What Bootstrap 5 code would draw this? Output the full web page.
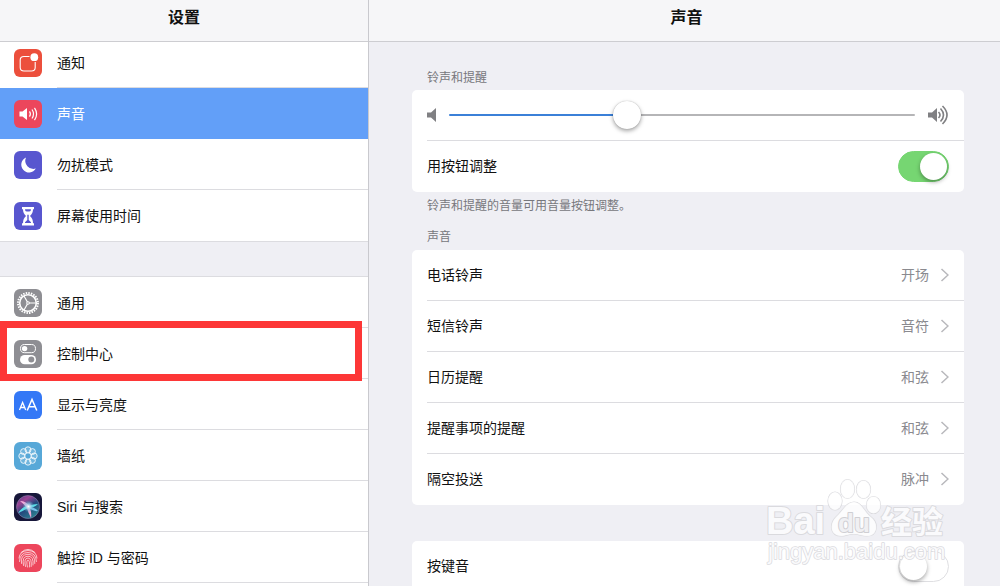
<!DOCTYPE html>
<html lang="zh-CN">
<head>
<meta charset="utf-8">
<meta name="viewport" content="width=device-width, initial-scale=1">
<title>设置 - 声音</title>
<link href="https://cdn.jsdelivr.net/npm/bootstrap@5.3.0/dist/css/bootstrap.min.css" rel="stylesheet">
<style>
  :root { --pane: #efeff4; --rule: #dcdce0; --bar-rule: #cdcdd1; --muted: #8a8a8f; }
  body { font-family: "Liberation Sans", "Noto Sans CJK SC", sans-serif; font-size: 14px; line-height: 20px; color: #111; background: var(--pane); }
  .side-col { flex: 0 0 36.9%; border-right: 1px solid #c9c9ce; }
  .title-bar { height: 42px; padding-bottom: 6px; background: #f6f6f8; border-bottom: 1px solid var(--bar-rule); z-index: 2; }
  .title-bar h1 { font-size: 16px; line-height: 20px; font-weight: 700; }
  .menu-first { margin-top: -5px; border-bottom: 1px solid var(--rule); }
  .menu-second { margin-top: 34px; border-top: 1px solid var(--rule); }
  .menu-row { height: 51px; padding-left: 14px; gap: 15px; color: #111; }
  .menu-row svg { width: 28px; height: 28px; flex: none; }
  .row-label { border-bottom: 1px solid var(--rule); padding-top: 2px; }
  .menu-first .menu-row:last-child .row-label, .menu-row.selected .row-label { border-color: transparent; }
  .menu-row.selected { background: #629ff8; color: #fff; }
  .marker { inset: -7px 6px -2px 0; border: 7px solid #fd3737; z-index: 1; pointer-events: none; }
  .detail { padding: 27px 36px 0 43px; }
  .caption { font-size: 12px; line-height: 18px; color: #77777c; padding-left: 15px; margin: 0; }
  .caption-top { padding-bottom: 3px; }
  .caption-next { padding-top: 13px; padding-bottom: 4px; }
  .note { padding-top: 5px; }
  .panel { background: #fff; border-radius: 5px; padding-left: 15px; }
  .panel-last { margin-top: 36px; }
  .panel-row { height: 51px; padding-right: 15px; border-bottom: 1px solid var(--rule); color: #111; }
  .panel-row:last-child { border-color: transparent; }
  .value-text { color: var(--muted); }
  .volume { appearance: none; -webkit-appearance: none; height: 28px; background: transparent; margin: 0; min-width: 0; }
  .volume::-webkit-slider-runnable-track { height: 2px; border-radius: 1px; background: linear-gradient(to right, #3b80d8 38%, #b5b5b7 38%); }
  .volume::-webkit-slider-thumb { -webkit-appearance: none; width: 28px; height: 28px; margin-top: -13px; border-radius: 50%; background: #fff; box-shadow: 0 2px 4px rgba(0,0,0,.35), 0 0 1px rgba(0,0,0,.3); }
  .toggle { appearance: none; -webkit-appearance: none; width: 51px; height: 31px; border-radius: 16px; border: 1px solid #dfdfe2; background: #fff; margin: 0; padding: 1px; display: flex; }
  .toggle::before { content: ""; width: 27px; height: 27px; border-radius: 50%; background: #fff; box-shadow: 0 2px 4px rgba(0,0,0,.35); }
  .toggle:checked { background: #76d672; border-color: #76d672; justify-content: flex-end; }
  .watermark { right: 48px; bottom: 16px; width: 192px; height: 96px; pointer-events: none; z-index: 3; }
</style>
</head>
<body>
<div class="d-flex vh-100 overflow-hidden">
  <aside class="side-col d-flex flex-column">
    <header class="title-bar d-flex align-items-center justify-content-center position-relative"><h1 class="m-0">设置</h1></header>
    <nav class="menu-first bg-white" aria-label="通知与声音">
      <a href="#" class="menu-row d-flex align-items-center text-decoration-none">
        <svg viewBox="0 0 28 28" aria-hidden="true"><rect width="28" height="28" rx="6" fill="#ec4f3c"/><path d="M15.500 7.500H10Q6.200 7.500 6.200 11V18.500Q6.200 22 10 22H17.500Q21.200 22 21.200 18.500V13" fill="none" stroke="#fff" stroke-width="1.100"/><circle cx="20.300" cy="8.200" r="3.900" fill="#fff"/></svg>
        <span class="row-label flex-fill h-100 d-flex align-items-center">通知</span></a>
      <a href="#" class="menu-row selected d-flex align-items-center text-decoration-none" aria-current="page">
        <svg viewBox="0 0 28 28" aria-hidden="true"><rect width="28" height="28" rx="6" fill="#ec465c"/><path d="M5.500 11.500H8.500L13 8V20L8.500 16.500H5.500Z" fill="#fff"/><path d="M15.500 11.300Q17.300 14 15.500 16.700M18 9.500Q21 14 18 18.500M20.500 7.800Q24.700 14 20.500 20.200" fill="none" stroke="#fff" stroke-width="1.200"/></svg>
        <span class="row-label flex-fill h-100 d-flex align-items-center">声音</span></a>
      <a href="#" class="menu-row d-flex align-items-center text-decoration-none">
        <svg viewBox="0 0 28 28" aria-hidden="true"><rect width="28" height="28" rx="6" fill="#5856cf"/><path d="M12 6.500A7.800 7.800 0 1 0 21.800 17.600A8.200 8.200 0 0 1 12 6.500Z" fill="#fff"/></svg>
        <span class="row-label flex-fill h-100 d-flex align-items-center">勿扰模式</span></a>
      <a href="#" class="menu-row d-flex align-items-center text-decoration-none">
        <svg viewBox="0 0 28 28" aria-hidden="true"><rect width="28" height="28" rx="6" fill="#5856cf"/><path d="M8 5H20V7.300H19Q19 11.500 16 14Q19 16.500 19 21.300H20V23.500H8V21.300H9Q9 16.500 12 14Q9 11.500 9 7.300H8Z" fill="#fff"/><path d="M11 7.300H17L16.600 9Q14 10 11.400 9ZM13.300 12.800H14.700V18L17 20.300V21H11V20.300L13.300 18Z" fill="#5856cf"/></svg>
        <span class="row-label flex-fill h-100 d-flex align-items-center">屏幕使用时间</span></a>
    </nav>
    <nav class="menu-second bg-white flex-grow-1" aria-label="通用设置">
      <a href="#" class="menu-row d-flex align-items-center text-decoration-none">
        <svg viewBox="0 0 28 28" aria-hidden="true"><rect width="28" height="28" rx="6" fill="#8e8e93"/><circle cx="14" cy="14" r="10" fill="none" stroke="#fff" stroke-width="2" stroke-dasharray="1.500 1.118"/><circle cx="14" cy="14" r="8.300" fill="none" stroke="#fff" stroke-width="1.600"/><path d="M14 14H22M14 14L10 7M14 14L10 21" stroke="#fff" stroke-width="1.200"/><circle cx="14" cy="14" r="1.800" fill="#fff"/><circle cx="14" cy="14" r=".8" fill="#8e8e93"/></svg>
        <span class="row-label flex-fill h-100 d-flex align-items-center">通用</span></a>
      <a href="#" class="menu-row d-flex align-items-center text-decoration-none position-relative">
        <svg viewBox="0 0 28 28" aria-hidden="true"><rect width="28" height="28" rx="6" fill="#8e8e93"/><rect x="6.500" y="4.500" width="15" height="8.200" rx="4.100" fill="none" stroke="#fff" stroke-width="1"/><circle cx="10.600" cy="8.600" r="2.700" fill="#fff"/><rect x="6" y="15" width="16" height="9.300" rx="4.650" fill="#fff"/><circle cx="17.300" cy="19.600" r="3" fill="#8e8e93"/></svg>
        <span class="row-label flex-fill h-100 d-flex align-items-center">控制中心</span>
        <span class="marker position-absolute"></span></a>
      <a href="#" class="menu-row d-flex align-items-center text-decoration-none">
        <svg viewBox="0 0 28 28" aria-hidden="true"><rect width="28" height="28" rx="6" fill="#3478f6"/><path d="M5.500 19L8.600 11.500L11.700 19M6.600 16.500H10.600" fill="none" stroke="#fff" stroke-width="1.300"/><path d="M13.200 19.500L18 8.500L22.800 19.500M14.800 15.800H21.200" fill="none" stroke="#fff" stroke-width="1.500"/></svg>
        <span class="row-label flex-fill h-100 d-flex align-items-center">显示与亮度</span></a>
      <a href="#" class="menu-row d-flex align-items-center text-decoration-none">
        <svg viewBox="0 0 28 28" aria-hidden="true"><rect width="28" height="28" rx="6" fill="#57a8d8"/><g fill="#fff" fill-opacity=".15" stroke="#fff" stroke-width=".8"><circle cx="14" cy="7.800" r="3"/><circle cx="18.400" cy="9.600" r="3"/><circle cx="20.200" cy="14" r="3"/><circle cx="18.400" cy="18.400" r="3"/><circle cx="14" cy="20.200" r="3"/><circle cx="9.600" cy="18.400" r="3"/><circle cx="7.800" cy="14" r="3"/><circle cx="9.600" cy="9.600" r="3"/><circle cx="14" cy="14" r="3.200" fill="#57a8d8" fill-opacity="1"/></g></svg>
        <span class="row-label flex-fill h-100 d-flex align-items-center">墙纸</span></a>
      <a href="#" class="menu-row d-flex align-items-center text-decoration-none">
        <svg viewBox="0 0 28 28" aria-hidden="true"><defs><linearGradient id="siriRing" x1="0" y1="0" x2=".7" y2="1"><stop offset="0" stop-color="#4b3f86"/><stop offset=".3" stop-color="#9a4394"/><stop offset=".6" stop-color="#24487d"/><stop offset="1" stop-color="#2b8290"/></linearGradient><radialGradient id="siriGlow"><stop offset="0" stop-color="#fff"/><stop offset=".4" stop-color="#a9d5ee" stop-opacity=".8"/><stop offset="1" stop-color="#4da9c9" stop-opacity="0"/></radialGradient></defs><rect width="28" height="28" rx="6" fill="#17173a"/><circle cx="14" cy="14" r="11.500" fill="url(#siriRing)"/><path d="M4 20Q9 13 14 13Q20 11 24 11Q20 15 14 15Q9 18 4 20Z" fill="#5be0e8"/><path d="M14 14Q21 14 24 18Q19 19 14 14Z" fill="#79c2ee"/><path d="M6 8Q12 8 15 13Q18 19 17 25Q14 19 13 15Q10 11 6 8Z" fill="#f0a9d9"/><circle cx="14.500" cy="13.500" r="6" fill="url(#siriGlow)"/><circle cx="14" cy="14" r="11.500" fill="none" stroke="#9d8eb8" stroke-opacity=".6" stroke-width=".8"/></svg>
        <span class="row-label flex-fill h-100 d-flex align-items-center">Siri 与搜索</span></a>
      <a href="#" class="menu-row d-flex align-items-center text-decoration-none">
        <svg viewBox="0 0 28 28" aria-hidden="true"><rect width="28" height="28" rx="6" fill="#ed465c"/><g fill="none" stroke="#fff" stroke-opacity=".85" stroke-width=".8" stroke-linecap="round"><path d="M7 8.500Q14 2 21 8.500M5 14Q5.500 7 14 6.500Q22.500 7 23 14M5.500 17.500Q5.700 8.600 14 8.500Q22 8.800 22.500 17.500M7.500 19.500Q6 10.500 14 10.300Q21.500 10.500 20.800 19.500M9.500 21.500Q7.500 12.300 14 12.200Q20 12.300 19 21M11.500 22.500Q9.500 14.200 14 14Q18 14.200 17.200 22.500M13.400 23Q12 16.200 14 16Q16 16.300 15.400 23"/></g></svg>
        <span class="row-label flex-fill h-100 d-flex align-items-center">触控 ID 与密码</span></a>
    </nav>
  </aside>

  <main class="flex-fill position-relative overflow-hidden">
    <header class="title-bar d-flex align-items-center justify-content-center position-relative ps-1"><h1 class="m-0">声音</h1></header>
    <div class="detail">
      <label for="volume" class="caption caption-top d-block">铃声和提醒</label>
      <section class="panel">
        <div class="panel-row d-flex align-items-center">
          <svg width="22" height="20" viewBox="0 0 22 20" fill="#808083" aria-hidden="true"><path d="M0 7.500H4L9 3V17L4 12.500H0Z"/></svg>
          <input id="volume" class="volume flex-fill" type="range" min="0" max="1000" value="375">
          <svg class="ms-2" width="26" height="22" viewBox="0 0 26 22" aria-hidden="true"><path d="M5 8.500H9L14 4V18L9 13.500H5Z" fill="#808083"/><path d="M15.500 8Q18.500 11 15.500 14M17.500 4.500Q23.500 11 17.500 17.500M19.500 2Q28.500 11 19.500 20" fill="none" stroke="#808083" stroke-width="1.600"/></svg>
        </div>
        <div class="panel-row d-flex align-items-center justify-content-between"><label for="buttons">用按钮调整</label><input id="buttons" class="toggle" type="checkbox" role="switch" checked></div>
      </section>
      <p class="caption note">铃声和提醒的音量可用音量按钮调整。</p>
      <h2 class="caption caption-next fw-normal">声音</h2>
      <section class="panel">
        <a href="#" class="panel-row d-flex align-items-center text-decoration-none"><span class="flex-fill">电话铃声</span><span class="value-text me-2">开场</span><svg width="12" height="16" viewBox="0 0 12 16" fill="none" stroke="#b8b8bc" stroke-width="1.500" aria-hidden="true"><path d="M4.500 2L11 8L4.500 14"/></svg></a>
        <a href="#" class="panel-row d-flex align-items-center text-decoration-none"><span class="flex-fill">短信铃声</span><span class="value-text me-2">音符</span><svg width="12" height="16" viewBox="0 0 12 16" fill="none" stroke="#b8b8bc" stroke-width="1.500" aria-hidden="true"><path d="M4.500 2L11 8L4.500 14"/></svg></a>
        <a href="#" class="panel-row d-flex align-items-center text-decoration-none"><span class="flex-fill">日历提醒</span><span class="value-text me-2">和弦</span><svg width="12" height="16" viewBox="0 0 12 16" fill="none" stroke="#b8b8bc" stroke-width="1.500" aria-hidden="true"><path d="M4.500 2L11 8L4.500 14"/></svg></a>
        <a href="#" class="panel-row d-flex align-items-center text-decoration-none"><span class="flex-fill">提醒事项的提醒</span><span class="value-text me-2">和弦</span><svg width="12" height="16" viewBox="0 0 12 16" fill="none" stroke="#b8b8bc" stroke-width="1.500" aria-hidden="true"><path d="M4.500 2L11 8L4.500 14"/></svg></a>
        <a href="#" class="panel-row d-flex align-items-center text-decoration-none"><span class="flex-fill">隔空投送</span><span class="value-text me-2">脉冲</span><svg width="12" height="16" viewBox="0 0 12 16" fill="none" stroke="#b8b8bc" stroke-width="1.500" aria-hidden="true"><path d="M4.500 2L11 8L4.500 14"/></svg></a>
      </section>
      <section class="panel panel-last">
        <div class="panel-row d-flex align-items-center justify-content-between"><label for="clicks">按键音</label><input id="clicks" class="toggle" type="checkbox" role="switch"></div>
      </section>
    </div>
    <svg class="watermark position-absolute" viewBox="0 0 192 96" aria-label="Baidu 经验">
      <g fill="#fff" fill-opacity=".8" stroke="#dadade" stroke-width="1.200" paint-order="stroke">
        <ellipse cx="75" cy="27" rx="7" ry="9"/><ellipse cx="87.500" cy="15" rx="7" ry="9.500"/><ellipse cx="103.500" cy="15.500" rx="7" ry="9"/><ellipse cx="113.500" cy="31" rx="7" ry="8.500"/>
        <path d="M94 28C102 28 104 38 111 43C119 49 118 62 107 62C101 62 99 60 94 60C88 60 86 62 81 62C70 62 69 50 76 43C83 37 86 28 94 28Z"/>
        <g font-family="Liberation Sans, Noto Sans CJK SC, sans-serif" stroke-width="2" fill="#fafafc" fill-opacity="1" stroke-linejoin="round">
          <text x="6" y="60" font-size="38" font-weight="700">Bai</text>
          <text x="78" y="58" font-size="26" font-weight="700" fill="#f0f0f3" stroke="#cfcfd3">du</text>
          <text x="121" y="59" font-size="31" font-weight="700">经验</text>
          <text x="8" y="85" font-size="22" stroke-width="1.500">jingyan.baidu.com</text>
        </g>
      </g>
    </svg>
  </main>
</div>
<script src="https://cdn.jsdelivr.net/npm/bootstrap@5.3.0/dist/js/bootstrap.bundle.min.js"></script>
</body>
</html>
